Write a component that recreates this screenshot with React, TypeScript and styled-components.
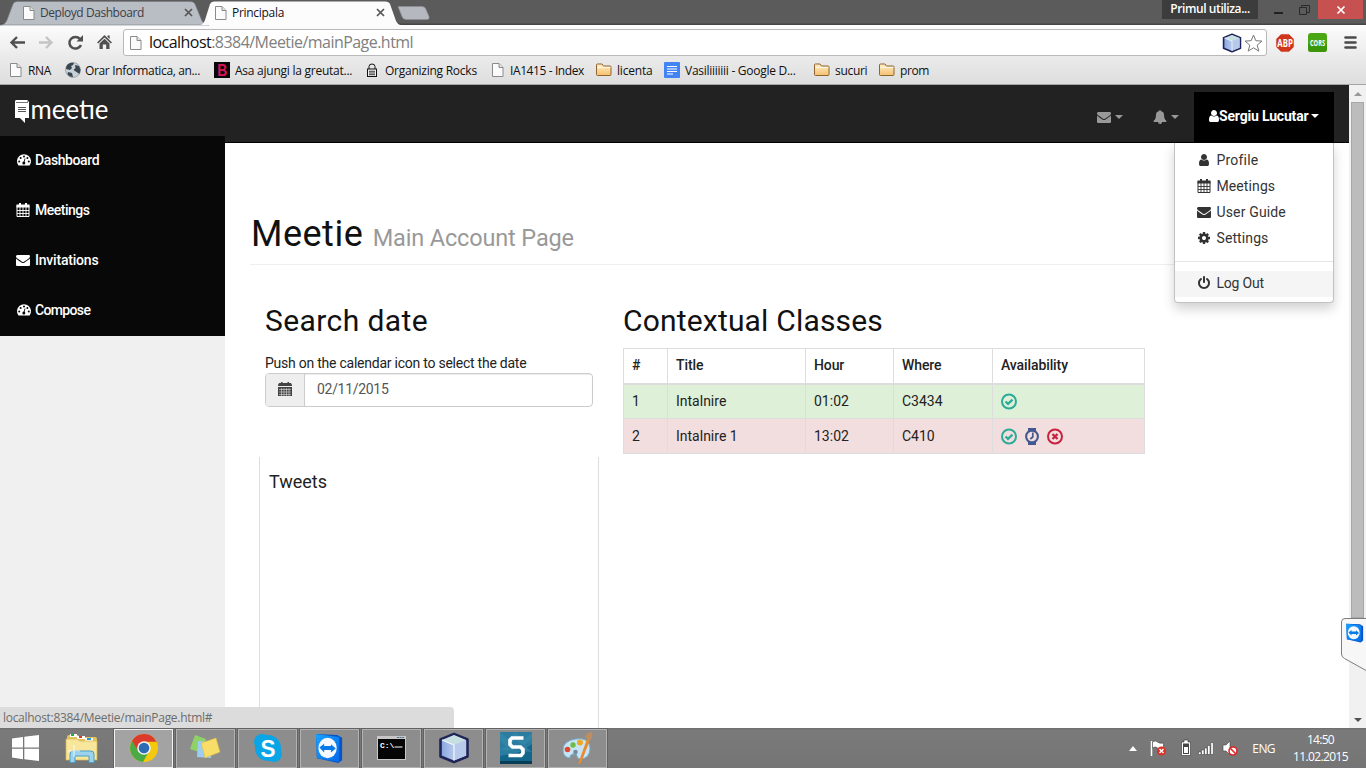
import React from 'react';
import styled, { createGlobalStyle } from 'styled-components';

const ui = `"Open Sans", "Noto Sans", sans-serif`;
const web = `Roboto, "Open Sans", sans-serif`;

const Global = createGlobalStyle`
  * { box-sizing: border-box; }
  body { margin: 0; overflow: hidden; background: #fff; }
  svg { display: block; flex: none; overflow: visible; }
`;

const Screen = styled.div`
  position: relative;
  width: 1366px;
  height: 768px;
  display: flex;
  flex-direction: column;
  overflow: hidden;
  font-family: ${ui};
  font-size: 12px;
`;

const Label = styled.span<{ $ls?: number }>`
  white-space: nowrap;
  letter-spacing: ${p => p.$ls ?? 0}px;
`;

/* ---------- browser frame ---------- */
const TitleBar = styled.div`
  height: 25px;
  flex: none;
  display: flex;
  align-items: flex-end;
  background: linear-gradient(#5b5b5b 0 23px, #454545 24px 25px);
`;
const Tab = styled.div<{ $w: number; $active?: boolean }>`
  position: relative;
  width: ${p => p.$w}px;
  height: 24px;
  display: flex;
  align-items: center;
  padding: 0 16px 1px ${p => (p.$active ? 15 : 23)}px;
  margin-left: ${p => (p.$active ? -9 : 0)}px;
  z-index: ${p => (p.$active ? 2 : 1)};
  color: ${p => (p.$active ? '#151020' : '#3c4046')};
`;
const TabShape = styled.svg`
  position: absolute;
  inset: 0;
  z-index: -1;
`;
const TabText = styled(Label)`
  flex: 1;
  margin-left: 5px;
`;
const NewTab = styled.svg`
  margin: 0 0 5px -3px;
`;
const WindowControls = styled.div`
  margin-left: auto;
  align-self: flex-start;
  display: flex;
  height: 19px;
`;
const UserBadge = styled.div`
  width: 96px;
  background: #3c3c3c;
  color: #fff;
  font-weight: 600;
  line-height: 18px;
  text-align: center;
`;
const WinButton = styled.div<{ $w: number; $close?: boolean }>`
  width: ${p => p.$w}px;
  display: flex;
  align-items: center;
  justify-content: center;
  background: ${p => (p.$close ? '#c75050' : 'transparent')};
  margin-right: ${p => (p.$close ? 3 : 0)}px;
`;
const Toolbar = styled.div`
  height: 33px;
  flex: none;
  display: flex;
  align-items: center;
  background: linear-gradient(#fcfcfc, #eaeaea);
  padding: 2px 9px 0 9px;
`;
const NavIcons = styled.div`
  display: flex;
  gap: 13px;
  width: 114px;
`;
const AddressBar = styled.div`
  width: 1144px;
  height: 27px;
  display: flex;
  align-items: center;
  gap: 2px;
  padding: 0 3px 0 6px;
  background: #fff;
  border: 1px solid #b9b9b9;
  border-radius: 3px;
  font-size: 16px;
  color: #808080;
  b { font-weight: 400; color: #111; }
`;
const Url = styled(Label)`
  flex: 1;
  margin-left: 5px;
  padding-bottom: 1px;
`;
const Extensions = styled.div`
  display: flex;
  align-items: center;
  margin-left: 8px;
  gap: 13px;
`;
const Bookmarks = styled.div`
  height: 27px;
  flex: none;
  display: flex;
  align-items: center;
  padding: 0 0 2px 10px;
  background: linear-gradient(#eaeaea, #dedede);
  border-bottom: 1px solid #a5a5a5;
  color: #101010;
`;
const Bookmark = styled.div<{ $w: number; $slot: number }>`
  width: ${p => p.$w}px;
  height: 24px;
  display: grid;
  grid-template-columns: ${p => p.$slot}px 1fr;
  align-items: center;
`;

/* ---------- page ---------- */
const Viewport = styled.div`
  height: 643px;
  flex: none;
  display: flex;
`;
const Page = styled.div`
  width: 1349px;
  display: flex;
  flex-direction: column;
  font-family: ${web};
  font-size: 14px;
  background: #fff;
  overflow: hidden;
`;
const NavBar = styled.header`
  height: 58px;
  flex: none;
  background: #222;
  border-bottom: 1px solid #000;
  display: flex;
  justify-content: space-between;
  align-items: flex-end;
`;
const Brand = styled.div`
  align-self: flex-start;
  padding: 15px 0 0 15px;
`;
const NavRight = styled.div`
  display: flex;
  align-items: center;
  height: 50px;
  margin-right: 15px;
`;
const NavToggle = styled.div<{ $w: number; $gap: number }>`
  width: ${p => p.$w}px;
  height: 50px;
  display: flex;
  align-items: center;
  gap: ${p => p.$gap}px;
  color: #999;
`;
const Caret = styled.i`
  border: 4px solid transparent;
  border-top-color: currentColor;
  border-bottom: 0;
`;
const Account = styled.div`
  position: relative;
  width: 140px;
  height: 50px;
  display: flex;
  align-items: center;
  padding: 0 0 2px 13px;
  background: #000;
  color: #fff;
  font-weight: 700;
`;
const AccountName = styled(Label)`
  margin: 0 3px 0 -2px;
`;
const Menu = styled.div`
  position: absolute;
  top: 51px;
  right: 0;
  width: 160px;
  height: 160px;
  padding: 4px 0;
  background: #fff;
  border: 1px solid #c2c2c2;
  border-top: 0;
  border-radius: 0 0 4px 4px;
  box-shadow: 0 6px 12px rgba(0, 0, 0, 0.18);
  color: #333;
  font-weight: 400;
  z-index: 5;
`;
const MenuItem = styled.div<{ $hover?: boolean }>`
  height: 26px;
  display: grid;
  grid-template-columns: 19.5px 1fr;
  align-items: center;
  padding: 0 0 ${p => (p.$hover ? 2 : 0)}px 22px;
  background: ${p => (p.$hover ? '#f5f5f5' : 'transparent')};
`;
const Divider = styled.div`
  height: 1px;
  margin: 10px 0 9px;
  background: #e5e5e5;
`;
const Body = styled.div`
  flex: 1;
  display: flex;
  min-height: 0;
`;
const Side = styled.nav`
  width: 225px;
  margin-top: -7px;
  background: #f0f0f0;
`;
const SideItem = styled.div`
  height: 50px;
  display: grid;
  grid-template-columns: 19px 1fr;
  align-items: center;
  padding: 0 0 2px 16px;
  background: #080808;
  color: #fff;
  font-weight: 500;
`;
const Content = styled.main`
  flex: 1;
  padding: 66px 15px 0 25px;
`;
const PageTitle = styled.h1`
  margin: 0 0 0 1px;
  height: 55px;
  font-size: 36px;
  line-height: 50px;
  font-weight: 400;
  letter-spacing: 0.5px;
  color: #111;
  small {
    font-size: 23.5px;
    color: #999;
    letter-spacing: -0.15px;
  }
`;
const Rule = styled.div`
  height: 1px;
  margin-bottom: 37px;
  background: #eee;
`;
const Columns = styled.div`
  display: flex;
  align-items: flex-start;
`;
const LeftColumn = styled.section`
  width: 340px;
  margin-left: 9px;
`;
const RightColumn = styled.section`
  width: 522px;
  margin-left: 24px;
`;
const SectionTitle = styled.h2<{ $ls: number }>`
  margin: 0;
  height: 46px;
  font-size: 30px;
  line-height: 37px;
  font-weight: 400;
  letter-spacing: ${p => p.$ls}px;
  white-space: nowrap;
  color: #111;
`;
const SearchBox = styled.div`
  padding: 0 6px;
  color: #222;
`;
const Hint = styled.div`
  height: 25px;
  line-height: 30px;
`;
const InputGroup = styled.div`
  display: flex;
  height: 34px;
  border: 1px solid #ccc;
  border-radius: 4px;
  overflow: hidden;
`;
const Addon = styled.div`
  width: 39px;
  display: flex;
  align-items: center;
  justify-content: center;
  background: #eee;
  border-right: 1px solid #ccc;
  padding: 0 1px 2px 0;
`;
const Field = styled.div`
  flex: 1;
  padding-left: 12px;
  line-height: 31px;
  letter-spacing: -0.3px;
  color: #555;
  box-shadow: inset 0 1px 1px rgba(0, 0, 0, 0.08);
`;
const Tweets = styled.div`
  margin-top: 50px;
  height: 300px;
  padding: 14px 9px;
  border: solid #ddd;
  border-width: 0 1px;
  font-size: 18px;
  line-height: 22px;
  color: #222;
`;
const Grid = styled.table`
  width: 522px;
  border-collapse: collapse;
  table-layout: fixed;
  color: #222;
`;
const Th = styled.th<{ $w: number }>`
  width: ${p => p.$w}px;
  height: 35px;
  padding: 0 8px 1px;
  text-align: left;
  font-weight: 500;
  letter-spacing: -0.1px;
  border: 1px solid #ddd;
  border-bottom-width: 2px;
`;
const Tr = styled.tr<{ $bg: string }>`
  background: ${p => p.$bg};
`;
const Td = styled.td`
  height: 35px;
  padding: 0 8px;
  border: 1px solid #ddd;
`;
const Actions = styled.div`
  display: flex;
  gap: 7px;
`;

const Scroll = styled.div`
  width: 17px;
  background: #f1f1f1;
  display: flex;
  flex-direction: column;
  align-items: center;
  padding: 7px 0 6px;
`;
const Thumb = styled.div`
  width: 13px;
  height: 516px;
  margin: 6px 0 auto;
  background: #bcbcbc;
  border: 1px solid #a8a8a8;
`;
const StatusBubble = styled.div`
  position: absolute;
  left: 0;
  top: 707px;
  width: 454px;
  height: 21px;
  padding-left: 3px;
  line-height: 21px;
  background: #dcdcdc;
  border-top-right-radius: 4px;
  color: #6d6d6d;
`;
const SideWidget = styled.div`
  position: absolute;
  left: 1340px;
  top: 617px;
`;

/* ---------- taskbar ---------- */
const Taskbar = styled.footer`
  height: 40px;
  flex: none;
  display: flex;
  align-items: center;
  background: linear-gradient(#6c6c6c, #7a7a7a 2px, #757575);
  color: #fff;
`;
const Launcher = styled.div<{ $w: number }>`
  width: ${p => p.$w}px;
  display: flex;
  justify-content: center;
`;
const Task = styled.div<{ $active?: boolean }>`
  width: 59px;
  height: 39px;
  margin-right: 3px;
  display: flex;
  align-items: center;
  justify-content: center;
  background: ${p => (p.$active ? '#a3a3a3' : '#8d8d8d')};
  border: 1px solid ${p => (p.$active ? '#f2f2f2' : '#b2b2b2')};
  outline: 1px solid #626262;
`;
const Tray = styled.div`
  margin-left: auto;
  display: flex;
  align-items: center;
`;
const TrayIcon = styled.div<{ $w: number }>`
  width: ${p => p.$w}px;
`;
const Clock = styled.div`
  width: 91px;
  text-align: center;
  line-height: 17px;
`;

/* ---------- icons ---------- */
const glyphs: Record<string, string> = {
  mail: 'M1792 710v794q0 66-47 113t-113 47h-1472q-66 0-113-47t-47-113v-794q44 49 101 87 362 246 497 345 57 42 92.5 65.5t94.5 48 110 24.5h2q51 0 110-24.5t94.5-48 92.5-65.5q170-123 498-345 57-39 100-87zm0-294q0 79-49 151t-122 123q-376 261-468 325-10 7-42.5 31t-54 38.5-52 32.5-57.5 27-50 9h-2q-23 0-50-9t-57.5-27-52-32.5-54-38.5-42.5-31q-91-64-262-182.5t-205-142.5q-62-42-117-115.5t-55-136.5q0-78 41.5-130t118.5-52h1472q65 0 112.5 47t47.5 113z',
  user: 'M1536 1399q0 109-62.5 187t-150.5 78h-854q-88 0-150.5-78t-62.5-187q0-85 8.5-160.5t31.5-152 58.5-131 94-89 134.5-34.5q131 128 313 128t313-128q76 0 134.5 34.5t94 89 58.5 131 31.5 152 8.5 160.5zm-256-887q0 159-112.5 271.5t-271.5 112.5-271.5-112.5-112.5-271.5 112.5-271.5 271.5-112.5 271.5 112.5 112.5 271.5z',
  bell: 'M912 1696q0-16-16-16-59 0-101.5-42.5t-42.5-101.5q0-16-16-16t-16 16q0 73 51.5 124.5t124.5 51.5q16 0 16-16zm816-288q0 52-38 90t-90 38h-448q0 106-75 181t-181 75-181-75-75-181h-448q-52 0-90-38t-38-90q50-42 91-88t85-119.5 74.5-158.5 50-206 19.5-260q0-152 117-282.5t307-158.5q-8-19-8-39 0-40 28-68t68-28 68 28 28 68q0 20-8 39 190 28 307 158.5t117 282.5q0 139 19.5 260t50 206 74.5 158.5 85 119.5 91 88z',
  cog: 'M1152 896q0-106-75-181t-181-75-181 75-75 181 75 181 181 75 181-75 75-181zm512-109v222q0 12-8 23t-20 13l-185 28q-19 54-39 91 35 50 107 138 10 12 10 25t-9 23q-27 37-99 108t-94 71q-12 0-26-9l-138-108q-44 23-91 38-16 136-29 186-7 28-36 28h-222q-14 0-24.5-8.5t-11.5-21.5l-28-184q-49-16-90-37l-141 107q-10 9-25 9-14 0-25-11-126-114-165-168-7-10-7-23 0-12 8-23 15-21 51-66.5t54-70.5q-27-50-41-99l-183-27q-13-2-21-12.5t-8-23.5v-222q0-12 8-23t19-13l186-28q14-46 39-92-40-57-107-138-10-12-10-24 0-10 9-23 26-36 98.5-107.5t94.5-71.5q13 0 26 10l138 107q44-23 91-38 16-136 29-186 7-28 36-28h222q14 0 24.5 8.5t11.5 21.5l28 184q49 16 90 37l142-107q9-9 24-9 13 0 25 10 129 119 165 170 7 8 7 22 0 12-8 23-15 21-51 66.5t-54 70.5q26 50 41 98l183 28q13 2 21 12.5t8 23.5z',
  power: 'M1664 896q0 156-61 298t-164 245-245 164-298 61-298-61-245-164-164-245-61-298q0-182 80.5-343t226.5-270q43-32 95.5-25t83.5 50q32 42 24.5 94.5t-49.5 84.5q-98 74-151.5 181t-53.5 228q0 104 40.5 198.5t109.5 163.5 163.5 109.5 198.5 40.5 198.5-40.5 163.5-109.5 109.5-163.5 40.5-198.5q0-121-53.5-228t-151.5-181q-42-32-49.5-84.5t24.5-94.5q31-43 84-50t95 25q146 109 226.5 270t80.5 343zm-640-768v640q0 52-38 90t-90 38-90-38-38-90v-640q0-52 38-90t90-38 90 38 38 90z',
};
const Glyph = ({ name, size = 14 }: { name: string; size?: number }) => (
  <svg width={size} height={size} viewBox="0 0 1792 1792" fill="currentColor"><path d={glyphs[name]} /></svg>
);
const CalendarIcon = () => (
  <svg width="14" height="14" viewBox="0 0 14 14" fill="none" stroke="currentColor">
    <path d="M1 2.500h12v11H1z" />
    <path d="M.5 3h13" strokeWidth="3" />
    <path d="M4 0v3M10 0v3" strokeWidth="2" />
    <path d="M1 7.500h12M1 10.500h12M4 4v10M7 4v10M10 4v10" strokeWidth=".9" />
  </svg>
);
const SolidCalendar = () => (
  <svg width="14" height="15" viewBox="0 0 14 15" fill="#444">
    <path d="M1 1h2v-1h1.500v1h5v-1h1.500v1h2l1 2v1H0V3zM0 5h14v9H0z" />
    <path d="M1 7.500h12M1 10h12M1 12.500h12M3.500 6v8M6 6v8M8.500 6v8M11 6v8" stroke="#ddd" strokeWidth=".6" />
  </svg>
);
const Gauge = ({ bg }: { bg: string }) => (
  <svg width="15" height="12" viewBox="-1 0 15 12">
    <path d="M1.300 11.300A7 7 0 1 1 12.700 11.300Q12.500 11.500 12 11.500H2Q1.500 11.500 1.300 11.300z" fill="#fff" />
    <g fill={bg}><circle cx="2.200" cy="7.500" r="1" /><circle cx="3.600" cy="4" r="1" /><circle cx="7" cy="2.500" r="1" /><circle cx="10.400" cy="4" r="1" /><circle cx="11.800" cy="7.500" r="1" /><circle cx="6.800" cy="9" r="1.500" /></g>
    <path d="M6.800 9L8 4.500" stroke={bg} strokeWidth=".9" />
  </svg>
);
const PageIcon = () => (
  <svg width="12" height="14" viewBox="0 0 12 14"><path d="M.5.500h6.500l4 4v9H.5z" fill="#fbfbfb" stroke="#8a8a8a" /><path d="M7 .5v4h4" fill="#e3e3e3" stroke="#8a8a8a" /></svg>
);
const CloseMark = () => (
  <svg width="9" height="9" viewBox="0 0 9 9" stroke="#555" strokeWidth="1.700"><path d="M1 1l7 7M8 1L1 8" /></svg>
);
const FolderIcon = () => (
  <svg width="16" height="14" viewBox="0 0 16 14">
    <defs><linearGradient id="fold" x2="0" y2="1"><stop stopColor="#fff0cb" /><stop offset="1" stopColor="#f5bf6c" /></linearGradient></defs>
    <path d="M.5 11.500V2Q.5 1 1.500 1h4.500l1.500 2h6.500q1 0 1 1v7.500q0 1-1 1H1.500q-1 0-1-1z" fill="url(#fold)" stroke="#8e6430" />
    <path d="M1.500 4.500h13" stroke="#fff7e3" />
  </svg>
);
const Globe = () => (
  <svg width="16" height="16" viewBox="0 0 16 16"><circle cx="8" cy="8" r="7.500" fill="#c9d1d8" stroke="#7b858d" strokeWidth=".6" /><path d="M2 3Q5 0 9 1l-1 2-2 1 1 2-2 2-4-1Q1 5 2 3zM10 3l4 1 1.500 4-1 4-3-2-3-2 2-2zM3 10l4 1 1 4Q4 15 2.500 12z" fill="#39464f" /></svg>
);
const LockIcon = () => (
  <svg width="12" height="14" viewBox="0 0 12 14" fill="none" stroke="#111"><path d="M3 6V3.500Q3 1 6 1t3 2.500V6" /><rect x="1.500" y="6" width="9" height="7.500" fill="#eee" /><path d="M3 8.300h6M3 10h6M3 11.700h6" strokeWidth=".8" /></svg>
);
const BIcon = () => (
  <svg width="16" height="16"><rect width="16" height="16" fill="#080808" /><text x="3.200" y="14" fontFamily="Liberation Sans" fontWeight="700" fontSize="16" textLength="10" lengthAdjust="spacingAndGlyphs" fill="#d8145c">B</text></svg>
);
const DocIcon = () => (
  <svg width="16" height="16"><rect width="16" height="16" rx="1" fill="#4384f5" /><path d="M3 4.500h10M3 7h10M3 9.500h10M3 12h6" stroke="#fff" strokeWidth="1.200" /></svg>
);
const Cube = ({ size, id }: { size: number; id: string }) => (
  <svg width={size} height={size} viewBox="0 0 32 32" strokeLinejoin="round">
    <defs><linearGradient id={id}><stop stopColor="#86a5de" /><stop offset="1" stopColor="#e6edf9" /></linearGradient></defs>
    <path d="M16 2l13.500 5.500v17L16 30 2.500 24.500v-17z" fill={`url(#${id})`} stroke="#1f2458" strokeWidth="2.600" />
    <path d="M16 3l12 5-12 5L4 8z" fill="#c7dfe0" /><path d="M16 13l12-5v15.500L16 28.500z" fill="#b7caec" /><path d="M4 8l12 5v15.500" fill="none" stroke="#f2f7ff" strokeWidth="1.200" />
  </svg>
);
const Star = () => (
  <svg width="19" height="18" viewBox="0 0 19 18"><path d="M9.500 1l2.300 5.700 6.200.4-4.800 4 1.600 6-5.300-3.300-5.300 3.300 1.600-6L1 7.100l6.200-.4z" fill="#fff" stroke="#777" /></svg>
);
const Abp = () => (
  <svg width="20" height="20" viewBox="0 0 20 20"><path d="M6 1h8l5 5v8l-5 5H6l-5-5V6z" fill="#d0361b" stroke="#e6e0de" strokeWidth=".6" /><text x="2.300" y="13.800" textLength="15.500" lengthAdjust="spacingAndGlyphs" fontFamily="Open Sans" fontWeight="700" fontSize="10.500" fill="#fff">ABP</text></svg>
);
const Cors = () => (
  <svg width="19" height="19" viewBox="0 0 19 19"><rect width="19" height="19" rx="3" fill="#4ba614" /><rect y="10" width="19" height="9" rx="3" fill="#3c9708" /><text x="2" y="12.700" textLength="15" lengthAdjust="spacingAndGlyphs" fontFamily="Open Sans" fontWeight="700" fontSize="9" fill="#fff">CORS</text></svg>
);
const LogoText = styled.text`
  font-family: Lato, sans-serif;
  font-size: 27px;
  font-weight: 400;
`;
const Logo = () => (
  <svg width="100" height="34" viewBox="0 0 100 34">
    <path d="M1 0h12l-1 1.500h2V18h-4v5l-5-5H0V1z" fill="#fff" />
    <path d="M1 2.500h12" stroke="#555" strokeWidth=".8" /><path d="M3 7.500h8M3 9.500h8M3 11.500h8" stroke="#444" strokeWidth=".9" />
    <LogoText x="15.500" y="18.800" textLength="78" lengthAdjust="spacingAndGlyphs" fill="#fff">meetıe</LogoText>
  </svg>
);
const CheckIcon = () => (
  <svg width="17" height="17" viewBox="0 0 17 17" fill="none" stroke="#2bab98"><circle cx="8" cy="8.500" r="7" strokeWidth="2" /><path d="M4.500 8.500l2.500 2.400 4.500-4.300" strokeWidth="2.200" /></svg>
);
const WatchIcon = () => (
  <svg width="15" height="17" viewBox="0 0 15 17" fill="none" stroke="#43598f"><path d="M3 1.500h8M3 15.500h8" strokeWidth="3" /><circle cx="7" cy="8.500" r="5.900" strokeWidth="2.100" fill="#f2dede" /><path d="M7.800 4.500v4.500l-2.500 2" strokeWidth="1.700" /></svg>
);
const CancelIcon = () => (
  <svg width="17" height="17" viewBox="0 0 17 17" fill="none" stroke="#c9203d"><circle cx="8" cy="8.500" r="7" strokeWidth="2" /><path d="M5.500 6l5 5M10.500 6l-5 5" strokeWidth="2.300" /></svg>
);
const TeamViewer = ({ size, id }: { size: number; id: string }) => (
  <svg width={size} height={size} viewBox="0 0 30 32">
    <defs><linearGradient id={id} y2="1"><stop stopColor="#19a2ff" /><stop offset="1" stopColor="#0568e8" /></linearGradient></defs>
    <path d="M1 1l22 1 5 3v23l-4 3L2 26z" fill="#0754c9" /><path d="M1 1l24 3v26L2 26z" fill={`url(#${id})`} />
    <ellipse cx="13" cy="15.500" rx="9.500" ry="10.500" fill="#f5f8fc" />
    <path d="M4.500 15l5-4v2.500h7V11.500l5 4.500-5 4v-2.500h-7V20z" fill="#087be9" />
  </svg>
);
const WindowsLogo = () => (
  <svg width="27" height="26" viewBox="0 0 27 26" fill="#fff"><path d="M0 3.500l11-1.600V12.500H0zM12.300 1.700L27 0v12.500H12.300zM0 13.700h11v10.500L0 22.600zM12.300 13.700H27V26l-14.700-1.800z" /></svg>
);
const Explorer = () => (
  <svg width="34" height="30" viewBox="0 0 34 30">
    <path d="M2 4q0-2 2-2h9l2 3 2-1h13q2 0 2 2v21H2z" fill="#e5c55b" />
    <path d="M5 1h7v3H5zM12 3h8v3h-8zM20 5h8v3h-8z" fill="#fff" /><path d="M6 1h3v2H6z" fill="#1bb23b" /><path d="M14 3h3v2h-3z" fill="#d93b28" /><path d="M22 5h4v2h-4z" fill="#2795df" />
    <path d="M1 6h11l3 2h17v19H1z" fill="#f8e69c" stroke="#d9b54d" strokeWidth=".7" />
    <path d="M5 29.500V21q0-3 3-3h18q3 0 3 3v8.500h-5V23H10v6.500z" fill="#9bd3ec" stroke="#4a9fc8" /><path d="M9 12v12M3 18h12" stroke="#fff" strokeWidth=".8" />
  </svg>
);
const Chrome = () => (
  <svg width="30" height="30" viewBox="0 0 30 30">
    <circle cx="15" cy="15" r="14" fill="#f4c80c" /><path d="M2.900 8A14 14 0 0 1 27.500 8.700H15l-6.500 9z" fill="#dc3a2c" />
    <path d="M2.900 8A14 14 0 0 0 14 29l6-10.500-5 2.500-5.500-3z" fill="#4aab46" />
    <circle cx="15" cy="15" r="6.800" fill="#f3f3f3" /><circle cx="15" cy="15" r="5.300" fill="#2d6cb5" />
  </svg>
);
const Notes = () => (
  <svg width="34" height="28" viewBox="0 0 34 28"><path d="M6 1l11 4-4 14L1 15z" fill="#8ed268" /><path d="M9 7l14 1-1 16-14-1z" fill="#9bcdf5" /><path d="M12 9l15-5 4 14-15 6z" fill="#f8dd68" stroke="#d7b946" strokeWidth=".6" /></svg>
);
const Skype = () => (
  <svg width="30" height="30" viewBox="0 0 30 30"><circle cx="15" cy="15" r="13" fill="#0aa5e6" /><circle cx="9" cy="9" r="8" fill="#0aa5e6" /><circle cx="21" cy="21" r="8" fill="#0aa5e6" /><text x="7.500" y="23.500" fontFamily="Liberation Sans" fontWeight="700" fontSize="24" textLength="15" lengthAdjust="spacingAndGlyphs" fill="#fff">S</text></svg>
);
const Terminal = () => (
  <svg width="29" height="24" viewBox="0 0 29 24"><rect width="29" height="24" fill="#c7c7c7" /><path d="M20 1.500h7" stroke="#547197" strokeDasharray="2 .6" /><rect x="1" y="3" width="27" height="20" fill="#050505" /><text x="3" y="11.500" fontFamily="Liberation Mono" fontWeight="700" fontSize="8" fill="#fff">C:\</text><path d="M17.500 11h8" stroke="#fff" /></svg>
);
const Snag = () => (
  <svg width="32" height="32" viewBox="0 0 32 32"><rect width="32" height="32" fill="#12658b" /><path d="M0 0h32v12L20 20 0 24z" fill="#2a7da1" /><path d="M0 0l8 7 7-7 9 8 8-8v7l-8 6-9-5-8 7-7-6zM0 18l9-5 8 8 8-7 7 6" fill="#3b8bac" opacity=".6" /><path d="M0 29h32v3H0z" fill="#093c55" /><path d="M23.500 6H12L10 8v4.500L12.500 15h8l2.500 2.500V21l-2 2.500H8.500" fill="none" stroke="#fff" strokeWidth="3.600" /></svg>
);
const Paint = () => (
  <svg width="33" height="32" viewBox="0 0 33 32"><path d="M15 7q13-2 14 9 0 10-9 11-4 0-4-3t-4-2-3 4q-7-1-7-8Q2 9 15 7z" fill="#c9e5f5" stroke="#73b2d7" /><circle cx="6.500" cy="17.500" r="2.800" fill="#dd4832" /><circle cx="12" cy="13" r="2.700" fill="#6dbb48" /><circle cx="19" cy="10.500" r="3" fill="#efa927" /><circle cx="14.500" cy="20" r="2.300" fill="#728c9b" /><path d="M26 7l3 1-9 23-3 1z" fill="#e98a30" /><path d="M24 5Q26 0 31 0q2 5-3 9z" fill="#bd8e62" /></svg>
);

const bookmarks: [React.ReactNode, string, number, number, number][] = [
  [<PageIcon />, 'RNA', 55, 18, -0.4],
  [<Globe />, 'Orar Informatica, an...', 149, 20, -0.35],
  [<BIcon />, 'Asa ajungi la greutat...', 152, 21, -0.25],
  [<LockIcon />, 'Organizing Rocks', 126, 19, -0.25],
  [<PageIcon />, 'IA1415 - Index', 104, 18, -0.4],
  [<FolderIcon />, 'licenta', 68, 21, -0.2],
  [<DocIcon />, 'Vasiliiiiiii - Google D...', 150, 21, -0.27],
  [<FolderIcon />, 'sucuri', 65, 21, -0.3],
  [<FolderIcon />, 'prom', 60, 21, -0.4],
];

export default function App() {
  return (
    <Screen>
      <Global />
      <TitleBar>
        <Tab $w={209}>
          <TabShape width="209" height="24"><path d="M0 24Q5 24 7 19L13 3Q14 .5 17 .5H190Q194 .5 195 3L202 20Q204 24 209 24z" fill="#b9bec5" stroke="#777b80" strokeWidth=".6" /></TabShape>
          <PageIcon /><TabText $ls={-0.45}>Deployd Dashboard</TabText>
          <CloseMark />
        </Tab>
        <Tab $w={201} $active>
          <TabShape width="201" height="24"><path d="M0 24Q3 24 5 19L10 3Q11 .5 14 .5H185Q189 .5 190 3L196 20Q198 24 201 24z" fill="#fcfcfc" /></TabShape>
          <PageIcon /><TabText $ls={-0.3}>Principala</TabText>
          <CloseMark />
        </Tab>
        <NewTab width="33" height="14" viewBox="0 0 33 14"><path d="M0 .5h24q3 0 4 3l3 7q1 3-2 3H8q-3 0-4-3z" fill="#b5b9bf" stroke="#8c8f94" strokeWidth=".6" /></NewTab>
        <WindowControls>
          <UserBadge><Label $ls={-0.4}>Primul utiliza...</Label></UserBadge>
          <WinButton $w={40}><svg width="9" height="15"><path d="M0 11h9" stroke="#222" strokeWidth="2" /></svg></WinButton>
          <WinButton $w={12}><svg width="11" height="10" viewBox="0 0 11 10" fill="none" stroke="#2a2a2a"><path d="M.5 2.500h7v7h-7zM2.500 2V.5h8v7H8" /></svg></WinButton>
          <WinButton $w={8} />
          <WinButton $w={45} $close><svg width="8" height="8" stroke="#fff" strokeWidth="1.700"><path d="M.5.500l7 7M7.500.500l-7 7" /></svg></WinButton>
        </WindowControls>
      </TitleBar>
      <Toolbar>
        <NavIcons>
          <svg width="16" height="16" viewBox="0 0 16 16" fill="none" stroke="#505050" strokeWidth="2.400"><path d="M16 7.500H2.500M8 2L2.500 7.500 8 13" /></svg>
          <svg width="16" height="16" viewBox="0 0 16 16" fill="none" stroke="#c4c4c4" strokeWidth="2.400"><path d="M1 7.500h12.500M8 2l5.500 5.500L8 13" /></svg>
          <svg width="16" height="16" viewBox="0 0 16 16" fill="none" stroke="#505050" strokeWidth="2.500"><path d="M13 4A6 5.800 0 1 0 14 10" /><path d="M16 0v6.500H9.500z" fill="#505050" stroke="none" /></svg>
          <svg width="16" height="16" viewBox="0 0 16 16" fill="#505050"><path d="M8.500 0l7.500 7.500-1.200 1L8.500 2.500 2.200 8.500 1 7.500zM3.500 8.500l5-4.700 5 4.700V14h-3.300V9.500H6.800V14H3.500zM11.500.500h2.200V4L11.500 2z" /></svg>
        </NavIcons>
        <AddressBar>
          <PageIcon />
          <Url $ls={-0.54}><b>localhost</b>:8384/Meetie/mainPage.html</Url>
          <Cube size={20} id="cubeA" /><Star />
        </AddressBar>
        <Extensions>
          <Abp /><Cors />
          <svg width="17" height="13" stroke="#4b4b4b" strokeWidth="2.600" strokeLinecap="round"><path d="M5.500 1.500h10M5.500 6.500h10M5.500 11.500h10" /></svg>
        </Extensions>
      </Toolbar>
      <Bookmarks>
        {bookmarks.map(([icon, text, w, slot, ls]) => (
          <Bookmark key={text} $w={w} $slot={slot}>{icon}<Label $ls={ls}>{text}</Label></Bookmark>
        ))}
      </Bookmarks>

      <Viewport>
        <Page>
          <NavBar>
            <Brand><Logo /></Brand>
            <NavRight>
              <NavToggle $w={56} $gap={4}><Glyph name="mail" /><Caret /></NavToggle>
              <NavToggle $w={41} $gap={4}><Glyph name="bell" /><Caret /></NavToggle>
              <Account>
                <Glyph name="user" size={14} />
                <AccountName $ls={-0.18}>Sergiu Lucutar</AccountName><Caret />
                <Menu>
                  <MenuItem><Glyph name="user" /><Label $ls={0.2}>Profile</Label></MenuItem>
                  <MenuItem><CalendarIcon /><Label $ls={0.1}>Meetings</Label></MenuItem>
                  <MenuItem><Glyph name="mail" /><Label $ls={0.15}>User Guide</Label></MenuItem>
                  <MenuItem><Glyph name="cog" /><Label $ls={0.1}>Settings</Label></MenuItem>
                  <Divider />
                  <MenuItem $hover><Glyph name="power" /><Label $ls={-0.2}>Log Out</Label></MenuItem>
                </Menu>
              </Account>
            </NavRight>
          </NavBar>
          <Body>
            <Side>
              <SideItem><Gauge bg="#080808" /><Label $ls={-0.4}>Dashboard</Label></SideItem>
              <SideItem><CalendarIcon /><Label $ls={-0.5}>Meetings</Label></SideItem>
              <SideItem><Glyph name="mail" /><Label $ls={-0.2}>Invitations</Label></SideItem>
              <SideItem><Gauge bg="#080808" /><Label $ls={-0.65}>Compose</Label></SideItem>
            </Side>
            <Content>
              <PageTitle>Meetie <small>Main Account Page</small></PageTitle>
              <Rule />
              <Columns>
                <LeftColumn>
                  <SearchBox>
                    <SectionTitle $ls={0.4}>Search date</SectionTitle>
                    <Hint><Label $ls={-0.24}>Push on the calendar icon to select the date</Label></Hint>
                    <InputGroup><Addon><SolidCalendar /></Addon><Field>02/11/2015</Field></InputGroup>
                  </SearchBox>
                  <Tweets>Tweets</Tweets>
                </LeftColumn>
                <RightColumn>
                  <SectionTitle $ls={0.18}>Contextual Classes</SectionTitle>
                  <Grid>
                    <thead>
                      <tr><Th $w={44}>#</Th><Th $w={138}>Title</Th><Th $w={88}>Hour</Th><Th $w={99}>Where</Th><Th $w={152}>Availability</Th></tr>
                    </thead>
                    <tbody>
                      <Tr $bg="#dff0d8"><Td>1</Td><Td>Intalnire</Td><Td>01:02</Td><Td>C3434</Td><Td><Actions><CheckIcon /></Actions></Td></Tr>
                      <Tr $bg="#f2dede"><Td>2</Td><Td>Intalnire 1</Td><Td>13:02</Td><Td>C410</Td><Td><Actions><CheckIcon /><WatchIcon /><CancelIcon /></Actions></Td></Tr>
                    </tbody>
                  </Grid>
                </RightColumn>
              </Columns>
            </Content>
          </Body>
        </Page>
        <Scroll>
          <svg width="8" height="4"><path d="M0 4l4-4 4 4z" fill="#999" /></svg>
          <Thumb />
          <svg width="8" height="4"><path d="M0 0h8L4 4z" fill="#505050" /></svg>
        </Scroll>
      </Viewport>

      <Taskbar>
        <Launcher $w={50}><WindowsLogo /></Launcher>
        <Launcher $w={64}><Explorer /></Launcher>
        <Task $active><Chrome /></Task>
        <Task><Notes /></Task>
        <Task><Skype /></Task>
        <Task><TeamViewer size={31} id="tvA" /></Task>
        <Task><Terminal /></Task>
        <Task><Cube size={32} id="cubeB" /></Task>
        <Task><Snag /></Task>
        <Task><Paint /></Task>
        <Tray>
          <TrayIcon $w={21}><svg width="8" height="5"><path d="M0 5l4-5 4 5z" fill="#fff" /></svg></TrayIcon>
          <TrayIcon $w={31}><svg width="17" height="16" viewBox="0 0 17 16"><path d="M1.500 1v15" stroke="#fff" strokeWidth="1.500" /><path d="M2.500 2q3-2 5 0t6 1v6q-4 1-6-1t-5 0z" fill="#fff" stroke="#444" strokeWidth=".6" /><circle cx="11.500" cy="11" r="4.500" fill="#dc3028" /><path d="M9.500 9l4 4M13.500 9l-4 4" stroke="#fff" strokeWidth="1.400" /></svg></TrayIcon>
          <TrayIcon $w={17}><svg width="10" height="16" viewBox="0 0 10 16"><path d="M3 0h4v2h2.500v13.500H.5V2H3z" fill="#fff" stroke="#333" strokeWidth=".6" /><rect x="2" y="3.500" width="6" height="10.500" fill="#444" /><rect x="3" y="7" width="4" height="6" fill="#fff" /></svg></TrayIcon>
          <TrayIcon $w={24}><svg width="16" height="13" fill="#fff" stroke="#333" strokeWidth=".5"><path d="M.5 10h2.500v2.500H.5zM3.500 8h2.500v4.500H3.500zM6.500 6h2.500v6.500H6.500zM9.500 3.500h2.500v9H9.500zM12.800.500h2.500v12h-2.500z" /></svg></TrayIcon>
          <TrayIcon $w={30}><svg width="16" height="16" viewBox="0 0 16 16"><path d="M1 5h3l4-4v14l-4-4H1z" fill="#fff" stroke="#444" strokeWidth=".6" /><circle cx="11" cy="11" r="4" fill="#fff" stroke="#dc2727" strokeWidth="1.600" /><path d="M8.300 8.300l5.400 5.400" stroke="#dc2727" strokeWidth="1.600" /></svg></TrayIcon>
          <Label $ls={-0.6}>ENG</Label>
          <Clock><Label $ls={-0.7}>14:50</Label><br /><Label $ls={-0.6}>11.02.2015</Label></Clock>
        </Tray>
      </Taskbar>

      <StatusBubble><Label $ls={-0.3}>localhost:8384/Meetie/mainPage.html#</Label></StatusBubble>
      <SideWidget>
        <svg width="26" height="54" viewBox="0 0 26 54"><path d="M27 1.500H5Q1.500 1.500 1.500 5v32q0 3 3 4.500L27 54" fill="#f7f7f7" stroke="#7d7d7d" /><g transform="translate(5 6)"><TeamViewer size={20} id="tvB" /></g></svg>
      </SideWidget>
    </Screen>
  );
}
